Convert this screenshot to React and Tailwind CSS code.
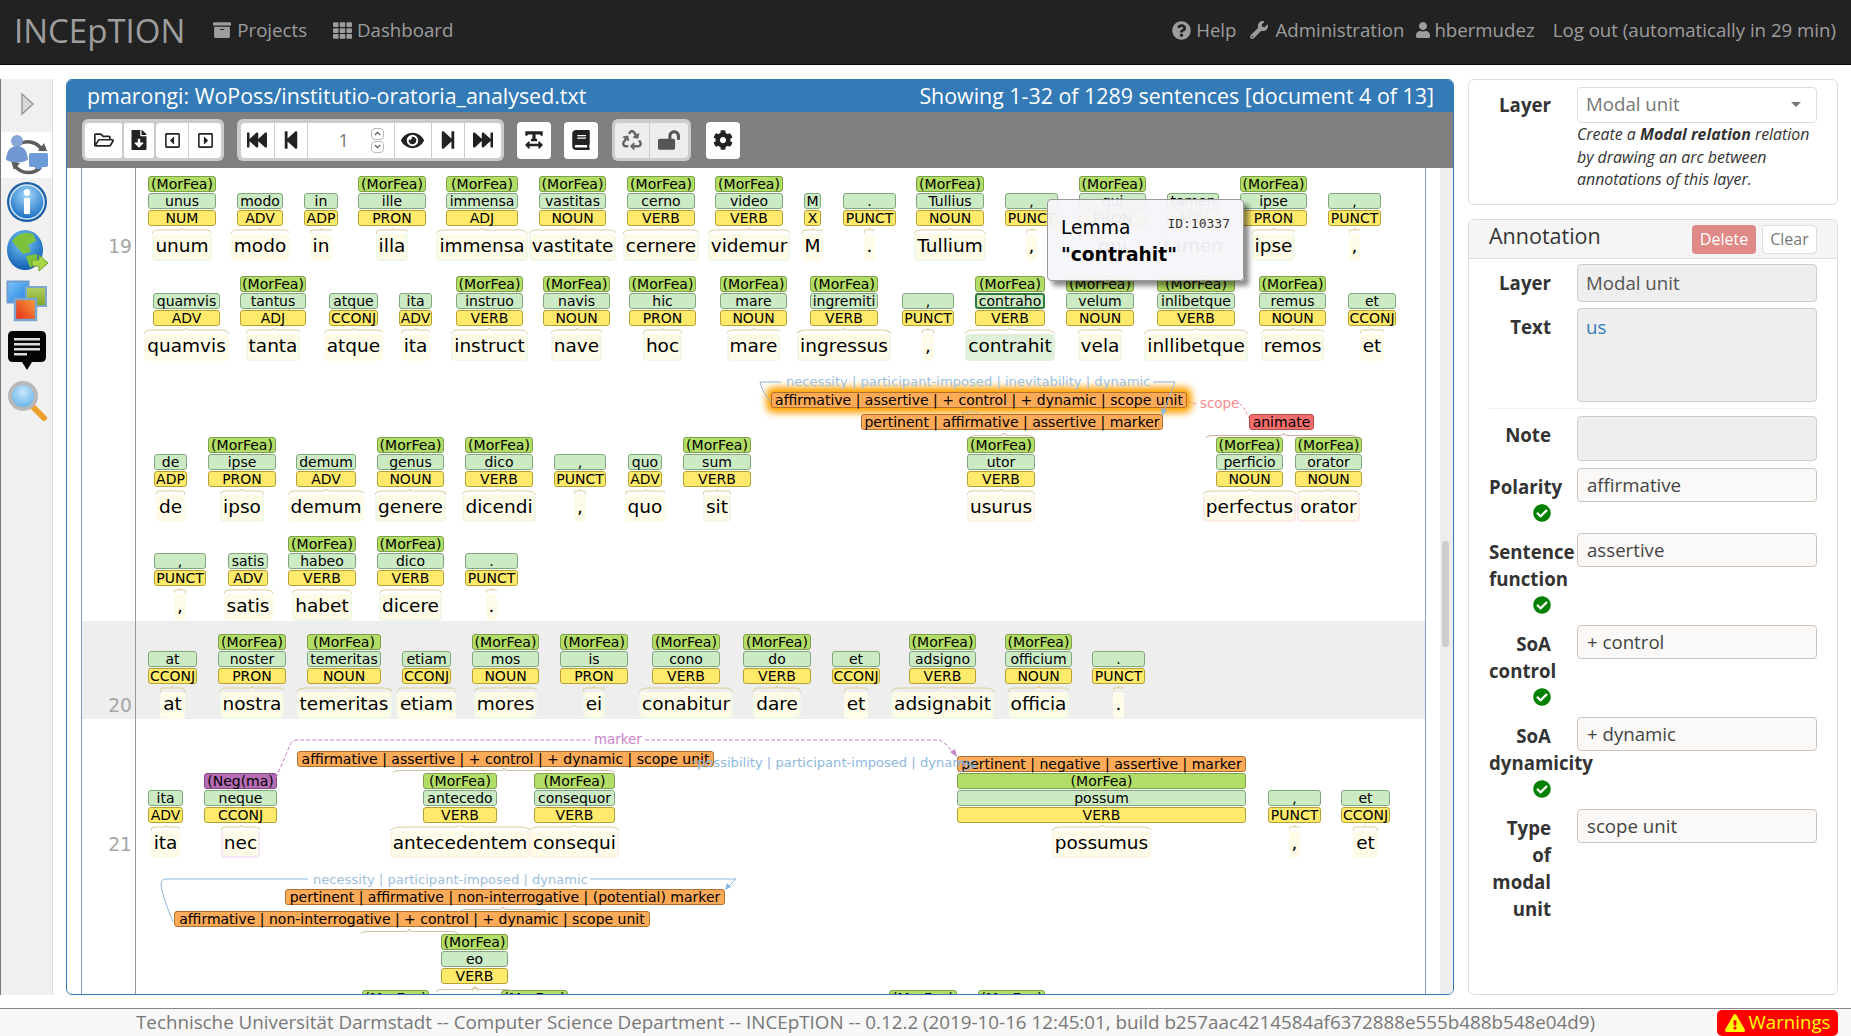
import {
  FaArchive, FaTh, FaQuestionCircle, FaWrench, FaUser, FaRegFolderOpen, FaFileDownload,
  FaRegCaretSquareLeft, FaRegCaretSquareRight, FaFastBackward, FaStepBackward, FaEye,
  FaStepForward, FaFastForward, FaTextWidth, FaBook, FaRecycle, FaLockOpen, FaCog,
  FaCheckCircle, FaExclamationTriangle, FaChevronUp, FaChevronDown,
} from "react-icons/fa";

const M = "(MorFea)";

// [lemma, pos, word, hasMorFea, left, right, tint]
const line1 = [
  ["unus", "NUM", "unum", 1, 148, 216],
  ["modo", "ADV", "modo", 0, 237, 283],
  ["in", "ADP", "in", 0, 304, 338],
  ["ille", "PRON", "illa", 1, 358, 426],
  ["immensa", "ADJ", "immensa", 1, 446, 518],
  ["vastitas", "NOUN", "vastitate", 1, 539, 606],
  ["cerno", "VERB", "cernere", 1, 627, 695],
  ["video", "VERB", "videmur", 1, 715, 783],
  ["M", "X", "M", 0, 804, 821],
  [".", "PUNCT", ".", 0, 843, 896],
  ["Tullius", "NOUN", "Tullium", 1, 916, 984],
  [",", "PUNCT", ",", 0, 1005, 1058],
  ["qui", "PRON", "qui", 1, 1079, 1146],
  ["tamen", "ADV", "tamen", 0, 1167, 1219],
  ["ipse", "PRON", "ipse", 1, 1240, 1307],
  [",", "PUNCT", ",", 0, 1328, 1381],
];
const line2 = [
  ["quamvis", "ADV", "quamvis", 0, 153, 220],
  ["tantus", "ADJ", "tanta", 1, 240, 306],
  ["atque", "CCONJ", "atque", 0, 329, 378],
  ["ita", "ADV", "ita", 0, 399, 432],
  ["instruo", "VERB", "instruct", 1, 456, 523],
  ["navis", "NOUN", "nave", 1, 543, 610],
  ["hic", "PRON", "hoc", 1, 629, 696],
  ["mare", "NOUN", "mare", 1, 720, 787],
  ["ingremiti", "VERB", "ingressus", 1, 810, 878],
  [",", "PUNCT", ",", 0, 902, 954],
  ["contraho", "VERB", "contrahit", 1, 975, 1045, "sel"],
  ["velum", "NOUN", "vela", 1, 1066, 1134],
  ["inlibetque", "VERB", "inllibetque", 1, 1157, 1235],
  ["remus", "NOUN", "remos", 1, 1259, 1326],
  ["et", "CCONJ", "et", 0, 1348, 1396],
];
const line3 = [
  ["de", "ADP", "de", 0, 154, 187],
  ["ipse", "PRON", "ipso", 1, 208, 276],
  ["demum", "ADV", "demum", 0, 296, 356],
  ["genus", "NOUN", "genere", 1, 377, 444],
  ["dico", "VERB", "dicendi", 1, 465, 533],
  [",", "PUNCT", ",", 0, 554, 606],
  ["quo", "ADV", "quo", 0, 628, 662],
  ["sum", "VERB", "sit", 1, 683, 751],
  ["utor", "VERB", "usurus", 1, 967, 1035, "orange"],
  ["perficio", "NOUN", "perfectus", 1, 1216, 1283, "red"],
  ["orator", "NOUN", "orator", 1, 1295, 1362, "red"],
];
const line4 = [
  [",", "PUNCT", ",", 0, 154, 206],
  ["satis", "ADV", "satis", 0, 228, 268],
  ["habeo", "VERB", "habet", 1, 288, 356],
  ["dico", "VERB", "dicere", 1, 377, 444],
  [".", "PUNCT", ".", 0, 465, 518],
];
const line20 = [
  ["at", "CCONJ", "at", 0, 148, 197],
  ["noster", "PRON", "nostra", 1, 218, 286],
  ["temeritas", "NOUN", "temeritas", 1, 307, 381],
  ["etiam", "CCONJ", "etiam", 0, 402, 451],
  ["mos", "NOUN", "mores", 1, 472, 539],
  ["is", "PRON", "ei", 1, 560, 628],
  ["cono", "VERB", "conabitur", 1, 652, 720],
  ["do", "VERB", "dare", 1, 743, 811],
  ["et", "CCONJ", "et", 0, 832, 880],
  ["adsigno", "VERB", "adsignabit", 1, 909, 976],
  ["officium", "NOUN", "officia", 1, 1005, 1072],
  [".", "PUNCT", ".", 0, 1092, 1145],
];
const line21 = [
  ["ita", "ADV", "ita", 0, 148, 183],
  ["neque", "CCONJ", "nec", 2, 204, 277, "purple"],
  ["antecedo", "VERB", "antecedentem", 1, 423, 497, "orange"],
  ["consequor", "VERB", "consequi", 1, 534, 615, "orange"],
  ["possum", "VERB", "possumus", 1, 957, 1246, "orange"],
  [",", "PUNCT", ",", 0, 1268, 1321],
  ["et", "CCONJ", "et", 0, 1341, 1390],
];

const wordTint = {
  green: "bg-[#fdfbe6] border-[#f0f8e8]",
  yellow: "bg-[#fefce9] border-[#fefce9]",
  sel: "bg-[#dff0d8] border-[#e4f3de]",
  orange: "bg-[#fefce9] border-[#fdf2e6]",
  red: "bg-[#fefce9] border-[#fde9e6]",
  purple: "bg-[#fefce9] border-[#f3e6f5]",
};

function Chip({ children, color }) {
  const colors = {
    green: "border bg-[#b2dd66] border-[#7f9f4c]",
    light: "border bg-[#ccebc5] border-[#7fa97c]",
    lightSel: "border-2 bg-[#ccebc5] border-[#2f7a3c]",
    yellow: "border bg-[#ffea6b] border-[#b5a134] mt-[1px]",
    purple: "border bg-[#b56cb5] border-[#7d4a7d]",
    red: "border bg-[#f56e6e] border-[#b04c4c]",
  };
  return (
    <div className={`h-4 w-full flex items-center justify-center rounded-[3px] text-[14px] leading-none text-black whitespace-nowrap ${colors[color]}`}>
      {children}
    </div>
  );
}

function Token({ t, y }) {
  const [lemma, pos, word, top, left, right, tint] = t;
  const wordClass = wordTint[tint || (top ? "green" : "yellow")];
  return (
    <div className="absolute flex flex-col items-center" style={{ left: left - 136, width: right - left, top: y }}>
      {top === 1 && <Chip color="green">{M}</Chip>}
      {top === 2 && <Chip color="purple">(Neg(ma)</Chip>}
      {!top && <div className="h-4" />}
      <div className="w-full mt-[1px]">
        <Chip color={tint === "sel" ? "lightSel" : "light"}>{lemma}</Chip>
      </div>
      <Chip color="yellow">{pos}</Chip>
      <div className={`relative mt-[8px] h-[27px] px-[1px] rounded-[4px] border-x-2 border-b-2 text-[18.5px] leading-[24px] text-black whitespace-nowrap ${wordClass}`}>
        {word}
        <svg className="absolute -top-[6px] -left-[2px] w-[calc(100%+4px)] h-[6px]" viewBox="0 0 100 6" preserveAspectRatio="none">
          <path d="M0 6 Q1 2 10 2 L46 2 Q50 2 50 0 Q50 2 54 2 L90 2 Q99 2 100 6" fill="none" stroke="#d8cf9a" strokeWidth="1" vectorEffect="non-scaling-stroke" />
        </svg>
      </div>
    </div>
  );
}

function Span({ x, x2, y, text, className = "" }) {
  return (
    <div className={`absolute flex items-center justify-center h-4 rounded-[3px] border bg-[#fdab58] border-[#b06f2c] text-[14px] leading-none text-black whitespace-nowrap ${className}`} style={{ left: x - 136, width: x2 - x, top: y }}>
      {text}
    </div>
  );
}

function Brace({ x, x2, y, peak, color = "#cdbfa0" }) {
  const p = peak ?? (x + x2) / 2;
  return <path d={`M${x} ${y + 4} Q${x + 1} ${y + 1.5} ${x + 8} ${y + 1.5} L${p - 4} ${y + 1.5} Q${p} ${y + 1.5} ${p} ${y - 1} Q${p} ${y + 1.5} ${p + 4} ${y + 1.5} L${x2 - 8} ${y + 1.5} Q${x2 - 1} ${y + 1.5} ${x2} ${y + 4}`} fill="none" stroke={color} strokeWidth="1" />;
}

function Sentence({ num, height, top, numY, className = "", children }) {
  return (
    <div className={`flex ${className}`} style={{ height }}>
      <div className="w-[54px] shrink-0 border-r border-[#999] text-right pr-[3px] text-[18.67px] text-[#a5a5a5]" style={{ paddingTop: numY - top }}>
        {num}
      </div>
      <div className="relative flex-1">{children}</div>
    </div>
  );
}

function Arcs({ top, height, children }) {
  return (
    <svg className="absolute left-0 top-0 w-[1290px] pointer-events-none overflow-visible" style={{ height }} viewBox={`136 ${top} 1290 ${height}`}>
      {children}
    </svg>
  );
}

function Btn({ children, className = "" }) {
  return (
    <button className={`h-[35px] flex items-center justify-center text-[#222] bg-white ${className}`}>
      {children}
    </button>
  );
}

function Field({ label, check, className = "", children }) {
  return (
    <div className={`flex gap-[26px] ${className}`}>
      <div className="w-[62px] shrink-0 pt-[5px] text-right text-[18.67px] leading-[27px] font-bold text-[#333]">
        {label}
        {check && (
          <div className="h-[27px] pt-[4px]">
            <FaCheckCircle className="ml-auto w-[18px] h-[18px] text-[#008000]" />
          </div>
        )}
      </div>
      {children}
    </div>
  );
}

function Value({ children }) {
  return (
    <div className="w-[240px] h-[34px] px-[9px] rounded-[4px] border border-[#ccc4be] bg-[#faf9f7] text-[18.67px] leading-[31px] text-[#444]">
      {children}
    </div>
  );
}

function SideIcons() {
  return (
    <div className="w-[53px] shrink-0 bg-[#f0f0f0] border-l border-l-[#777] border-r border-r-[#ddd] flex flex-col items-center">
      <svg width="16" height="24" viewBox="0 0 16 24" className="mt-[13px] mb-[16px]">
        <path d="M3 2 L14 12 L3 22 Z" fill="#d8d8d8" stroke="#999" strokeWidth="1.5" />
      </svg>
      <div className="w-full h-[46px] bg-white flex items-center justify-center">
        <svg width="44" height="42" viewBox="0 0 44 42">
          <path d="M14 10 A17 17 0 0 1 37 16" fill="none" stroke="#5c5c5c" strokeWidth="3.5" />
          <path d="M33 17 L42 17 L39 9 Z" fill="#5c5c5c" />
          <path d="M36 33 A17 17 0 0 1 10 32" fill="none" stroke="#5c5c5c" strokeWidth="3.5" />
          <path d="M6 27 L15 29 L9 36 Z" fill="#5c5c5c" />
          <circle cx="12" cy="7" r="6" fill="#86a6d8" />
          <path d="M1 26 Q2 12 12 12 Q22 12 23 26 Q12 31 1 26 Z" fill="#7397d2" />
          <rect x="24" y="19" width="19" height="14" rx="2" fill="#6c9bd8" />
          <rect x="30" y="33" width="7" height="2" fill="#6c9bd8" />
        </svg>
      </div>
      <svg width="42" height="42" viewBox="0 0 42 42" className="mt-[3px]">
        <defs>
          <radialGradient id="infoG" cx="50%" cy="30%" r="70%">
            <stop offset="0%" stopColor="#a6d8fa" />
            <stop offset="100%" stopColor="#1a6fc2" />
          </radialGradient>
        </defs>
        <circle cx="21" cy="21" r="20" fill="#1d5fa6" />
        <circle cx="21" cy="21" r="17" fill="url(#infoG)" stroke="#d5e8f8" strokeWidth="1.5" />
        <circle cx="21" cy="11.5" r="3.2" fill="#fff" />
        <rect x="18" y="17" width="6" height="16" rx="1" fill="#fff" />
      </svg>
      <svg width="42" height="44" viewBox="0 0 42 44" className="mt-[6px]">
        <defs>
          <radialGradient id="globeG" cx="45%" cy="30%" r="70%">
            <stop offset="0%" stopColor="#7cc8f8" />
            <stop offset="100%" stopColor="#0f5fb5" />
          </radialGradient>
        </defs>
        <ellipse cx="19" cy="21" rx="18" ry="20" fill="url(#globeG)" />
        <path d="M6 12 Q14 1 27 5 L30 12 L22 16 L25 23 L17 25 L11 18 Z" fill="#7cc23a" />
        <path d="M20 27 L31 25 L31 33 L24 39 Z" fill="#7cc23a" />
        <path d="M26 31 H33 V26 L42 34 L33 42 V37 H26 Z" fill="#a6d646" stroke="#6f9f2a" strokeWidth="1" />
      </svg>
      <svg width="42" height="42" viewBox="0 0 42 42" className="mt-[7px]">
        <defs>
          <linearGradient id="winB" x1="0" y1="0" x2="1" y2="1">
            <stop offset="0%" stopColor="#7cc4f8" />
            <stop offset="100%" stopColor="#1f7fe0" />
          </linearGradient>
          <linearGradient id="winG" x1="0" y1="0" x2="0" y2="1">
            <stop offset="0%" stopColor="#b4cf68" />
            <stop offset="100%" stopColor="#7ea51f" />
          </linearGradient>
          <linearGradient id="winR" x1="0" y1="1" x2="1" y2="0">
            <stop offset="0%" stopColor="#e82a14" />
            <stop offset="100%" stopColor="#f5a040" />
          </linearGradient>
        </defs>
        <rect x="1.5" y="1.5" width="21" height="21" fill="url(#winB)" stroke="#6f9ccc" strokeWidth="2" />
        <rect x="20" y="7" width="20" height="19" fill="url(#winG)" stroke="#7ea6cc" strokeWidth="2" />
        <rect x="9" y="19" width="21" height="21" fill="url(#winR)" stroke="#7ea6cc" strokeWidth="2.5" />
      </svg>
      <svg width="40" height="40" viewBox="0 0 40 40" className="mt-[9px]">
        <path d="M6 0 H34 Q39 0 39 5 V26 Q39 31 34 31 H25 L20 39 L15 31 H6 Q1 31 1 26 V5 Q1 0 6 0 Z" fill="#050505" />
        <rect x="7" y="7" width="26" height="2.5" fill="#ddd" />
        <rect x="7" y="12" width="26" height="2.5" fill="#ddd" />
        <rect x="7" y="17" width="26" height="2.5" fill="#ddd" />
        <rect x="7" y="22" width="13" height="2.5" fill="#ddd" />
      </svg>
      <svg width="42" height="42" viewBox="0 0 42 42" className="mt-[9px]">
        <defs>
          <radialGradient id="lensG" cx="50%" cy="35%" r="65%">
            <stop offset="0%" stopColor="#c8e8fb" />
            <stop offset="100%" stopColor="#5fb0ea" />
          </radialGradient>
        </defs>
        <path d="M27 27 L38 38" stroke="#eca02c" strokeWidth="6" strokeLinecap="round" />
        <circle cx="17" cy="16" r="13" fill="url(#lensG)" stroke="#b8b8b8" strokeWidth="4" />
      </svg>
    </div>
  );
}

function Toolbar() {
  const i = "w-[20px] h-[20px]";
  const sep = "border-r border-[#ccc]";
  return (
    <div className="h-[56px] bg-[#808080] flex items-center pl-[15px]">
      <div className="flex bg-[#ccc] rounded-[6px] p-[3px] h-[42px] items-center">
        <div className="flex gap-[2px]">
          <Btn className="w-[37px] rounded-l-[4px] rounded-r-[2px]"><FaRegFolderOpen className={i} /></Btn>
          <Btn className="w-[30px] rounded-[2px]"><FaFileDownload className={i} /></Btn>
          <div className="flex rounded-[4px] overflow-hidden">
            <Btn className={`w-[33px] ${sep}`}><FaRegCaretSquareLeft className="w-[17px] h-[17px]" /></Btn>
            <Btn className="w-[32px]"><FaRegCaretSquareRight className="w-[17px] h-[17px]" /></Btn>
          </div>
        </div>
      </div>
      <div className="flex bg-[#ccc] rounded-[6px] p-[3.5px] h-[42px] items-center ml-[13px]">
        <div className="flex rounded-[4px] overflow-hidden">
          <Btn className={`w-[34px] ${sep}`}><FaFastBackward className={i} /></Btn>
          <Btn className={`w-[33px] ${sep}`}><FaStepBackward className={i} /></Btn>
          <div className={`w-[87px] h-[35px] bg-white flex items-center ${sep} text-[18px] text-[#777]`}>
            <span className="ml-[31px] w-[32px]">1</span>
            <span className="flex flex-col gap-[1px]">
              <span className="w-[13px] h-[12px] rounded-[4px] border border-[#bbb] flex items-center justify-center"><FaChevronUp className="w-[7px] h-[7px] text-[#444]" /></span>
              <span className="w-[13px] h-[12px] rounded-[4px] border border-[#bbb] flex items-center justify-center"><FaChevronDown className="w-[7px] h-[7px] text-[#444]" /></span>
            </span>
          </div>
          <Btn className={`w-[37px] ${sep}`}><FaEye className="w-[23px] h-[23px]" /></Btn>
          <Btn className={`w-[33px] ${sep}`}><FaStepForward className={i} /></Btn>
          <Btn className="w-[36px]"><FaFastForward className={i} /></Btn>
        </div>
      </div>
      <Btn className="w-[34px] h-[37px] ml-[13px] rounded-[4px]"><FaTextWidth className={i} /></Btn>
      <Btn className="w-[34px] h-[37px] ml-[13px] rounded-[4px]"><FaBook className={i} /></Btn>
      <div className="flex bg-[#ccc] rounded-[6px] p-[3px] h-[42px] items-center ml-[14px]">
        <div className="flex rounded-[4px] overflow-hidden">
          <Btn className={`w-[35px] !bg-[#eee] !text-[#666] ${sep}`}><FaRecycle className={i} /></Btn>
          <Btn className="w-[38px] !bg-[#eee] !text-[#555]"><FaLockOpen className="w-[22px] h-[22px]" /></Btn>
        </div>
      </div>
      <Btn className="w-[34px] h-[37px] ml-[15px] rounded-[4px]"><FaCog className={i} /></Btn>
    </div>
  );
}

function Canvas() {
  const dejavu = "font-['DejaVu_Sans',sans-serif]";
  return (
    <div className={`relative flex-1 ml-[14px] border-x border-[#7c9fe0] overflow-hidden ${dejavu}`}>
      <Sentence num="19" top={168} numY={233} height={453}>
        {line1.map((t) => <Token key={t[2] + t[4]} t={t} y={8} />)}
        {line2.map((t) => <Token key={t[2] + t[4]} t={t} y={108} />)}
        {line3.map((t) => <Token key={t[2] + t[4]} t={t} y={269} />)}
        {line4.map((t) => <Token key={t[2] + t[4]} t={t} y={368} />)}
        <Span x={771} x2={1187} y={224} text="affirmative | assertive | + control | + dynamic | scope unit" className="shadow-[0_0_7px_5px_#ffa200]" />
        <Span x={861} x2={1163} y={246} text="pertinent | affirmative | assertive | marker" />
        <div className="absolute left-[1113px] top-[246px] w-[65px]">
          <Chip color="red">animate</Chip>
        </div>
        <Arcs top={168} height={453}>
          <path d="M771 402 Q762 392 760 382 L781 382" fill="none" stroke="#8db6dc" strokeWidth="1" />
          <path d="M1153 382 L1175 382 L1163 413" fill="none" stroke="#8db6dc" strokeWidth="1" />
          <path d="M1162 416 L1161 408 L1167 410 Z" fill="#8db6dc" />
          <text x="786" y="386" fontSize="13.1" fill="#9cc0e0">necessity | participant-imposed | inevitability | dynamic</text>
          <path d="M1188 402 L1197 404 M1240 404 L1244 408 L1249 418" fill="none" stroke="#f58c8c" strokeWidth="1" strokeDasharray="3 2" />
          <text x="1200" y="408" fontSize="13.4" fill="#f58c8c">scope</text>
          <Brace x={969} x2={1034} y={434} peak={1004} />
          <Brace x={1206} x2={1358} y={434} peak={1284} color="#d6a8a0" />
          <Brace x={960} x2={980} y={411} color="#cdbfa0" />
        </Arcs>
      </Sentence>
      <Sentence num="20" top={621} numY={692} height={98} className="bg-[#eee]">
        {line20.map((t) => <Token key={t[2] + t[4]} t={t} y={13} />)}
      </Sentence>
      <Sentence num="21" top={719} numY={831} height={276}>
        {line21.map((t) => <Token key={t[2] + t[4]} t={t} y={54} />)}
        <Span x={297} x2={714} y={32} text="affirmative | assertive | + control | + dynamic | scope unit" />
        <Span x={957} x2={1246} y={37} text="pertinent | negative | assertive | marker" />
        <Span x={285} x2={725} y={170} text="pertinent | affirmative | non-interrogative | (potential) marker" />
        <Span x={174} x2={650} y={192} text="affirmative | non-interrogative | + control | + dynamic | scope unit" />
        <Token t={["eo", "VERB", "", 1, 441, 508]} y={215} />
        <div className="absolute left-[226px] top-[271px] w-[67px]"><Chip color="green">{M}</Chip></div>
        <div className="absolute left-[365px] top-[271px] w-[67px]"><Chip color="green">{M}</Chip></div>
        <div className="absolute left-[753px] top-[271px] w-[68px]"><Chip color="green">{M}</Chip></div>
        <div className="absolute left-[842px] top-[271px] w-[67px]"><Chip color="green">{M}</Chip></div>
        <Arcs top={719} height={276}>
          <path d="M276 778 L290 745 Q292 740 298 740 L590 740" fill="none" stroke="#c983c9" strokeWidth="1" strokeDasharray="4 2" />
          <path d="M645 740 L940 740 L947 745 L956 756" fill="none" stroke="#c983c9" strokeWidth="1" strokeDasharray="4 2" />
          <path d="M957 757 L950 752 L955 749 Z" fill="#c983c9" />
          <text x="594" y="744" fontSize="13.4" fill="#c983c9">marker</text>
          <path d="M692 762 L697 762" fill="none" stroke="#8db6dc" strokeWidth="1" />
          <text x="697" y="767" fontSize="13.1" fill="#8fb8dd">possibility | participant-imposed | dynamic</text>
          <path d="M958 762 L977 766 L960 772" fill="none" stroke="#8db6dc" strokeWidth="1" />
          <Brace x={393} x2={615} y={769} peak={504} />
          <path d="M173 922 Q162 895 161 885 Q161 879 166 879 L308 879" fill="none" stroke="#8db6dc" strokeWidth="1" />
          <path d="M590 879 L736 879 L726 889" fill="none" stroke="#8db6dc" strokeWidth="1" />
          <path d="M725 890 L727 883 L731 887 Z" fill="#8db6dc" />
          <text x="313" y="884" fontSize="13.1" fill="#9cc0e0">necessity | participant-imposed | dynamic</text>
          <Brace x={459} x2={547} y={908} />
          <Brace x={361} x2={458} y={930} peak={409} />
          <Brace x={436} x2={513} y={988} peak={475} />
        </Arcs>
      </Sentence>

      <div className="absolute left-[965px] top-[31px] w-[197px] h-[82px] rounded-[4px] border border-[#999] bg-[#f5f5fa]/95 shadow-[5px_5px_5px_rgba(0,0,0,0.45)] pl-[13px] pr-[13px] pt-[14px] text-[18.67px] leading-[27px] text-black">
        <div className="flex justify-between items-start">
          <span>Lemma</span>
          <span className="font-['DejaVu_Sans_Mono',monospace] text-[13px] leading-[20px] text-[#333]">ID:10337</span>
        </div>
        <div className="font-bold">"contrahit"</div>
      </div>
    </div>
  );
}

function RightPanel() {
  return (
    <div className="w-[370px] shrink-0 ml-[14px] flex flex-col gap-[14px]">
      <div className="h-[126px] rounded-[6px] border border-[#ddd] pl-[20px] pt-[7px] flex gap-[26px]">
        <div className="w-[62px] shrink-0 text-right text-[18.67px] leading-[36px] font-bold text-[#333]">Layer</div>
        <div className="w-[240px]">
          <div className="h-[36px] px-[8px] pb-[2px] rounded-[4px] border border-[#ddd] text-[18.67px] leading-[32px] text-[#777] flex justify-between items-center">
            Modal unit
            <span className="mr-[7px] border-x-[5px] border-x-transparent border-t-[5px] border-t-[#777]" />
          </div>
          <p className="text-[15.9px] leading-[22.6px] italic text-[#333] whitespace-nowrap">
            Create a <b>Modal relation</b> relation<br />by drawing an arc between<br />annotations of this layer.
          </p>
        </div>
      </div>
      <div className="flex-1 rounded-[6px] border border-[#ddd]">
        <div className="h-[39px] bg-[#f5f5f5] border-b border-[#ddd] rounded-t-[6px] flex items-center pl-[20px] pr-[20px]">
          <span className="text-[21.5px] text-[#333] leading-none -mt-[6px]">Annotation</span>
          <span className="ml-auto h-[29px] w-[64px] rounded-[4px] bg-[#e08a87] text-white text-[16px] leading-[29px] text-center">Delete</span>
          <span className="ml-[6px] h-[29px] w-[55px] rounded-[4px] bg-white border border-[#ddd] text-[#777] text-[16px] leading-[27px] text-center">Clear</span>
        </div>
        <div className="pl-[20px] pt-[5px]">
          <Field label="Layer">
            <div className="w-[240px] h-[38px] px-[8px] rounded-[4px] border border-[#ccc] bg-[#eee] text-[18.67px] leading-[36px] text-[#555]">Modal unit</div>
          </Field>
          <Field label="Text" className="mt-[6px]">
            <div className="w-[240px] h-[94px] px-[8px] pt-[4px] rounded-[4px] border border-[#ccc] bg-[#eee] text-[18.67px] leading-[27px] text-[#337ab7]">us</div>
          </Field>
          <div className="w-[328px] mt-[6px] border-t border-[#eee]" />
          <Field label="Note" className="mt-[7px]">
            <div className="w-[240px] h-[45px] rounded-[4px] border border-[#ccc] bg-[#eee]" />
          </Field>
          <Field label="Polarity" check className="mt-[7px]"><Value>affirmative</Value></Field>
          <Field label="Sentence function" check className="mt-[6px]"><Value>assertive</Value></Field>
          <Field label="SoA control" check className="mt-[6px]"><Value>+ control</Value></Field>
          <Field label="SoA dynamicity" check className="mt-[6px]"><Value>+ dynamic</Value></Field>
          <Field label="Type of modal unit" className="mt-[6px]"><Value>scope unit</Value></Field>
        </div>
      </div>
    </div>
  );
}

export default function App() {
  return (
    <div className="h-screen w-full flex flex-col overflow-hidden bg-white font-['Open_Sans',sans-serif]">
      <nav className="h-[65px] shrink-0 bg-[#222] border-b border-[#080808] pb-[4px] flex items-center text-[18.67px] text-[#9d9d9d]">
        <span className="ml-[14px] text-[33px] leading-none">INCEpTION</span>
        <FaArchive className="ml-[28px] w-[18px] h-[18px]" />
        <span className="ml-[6px]">Projects</span>
        <FaTh className="ml-[26px] w-[19px] h-[19px]" />
        <span className="ml-[5px]">Dashboard</span>
        <div className="ml-auto mr-[15px] flex items-center">
          <FaQuestionCircle className="w-[19px] h-[19px]" />
          <span className="ml-[5px]">Help</span>
          <FaWrench className="ml-[14px] w-[18px] h-[18px]" />
          <span className="ml-[7px]">Administration</span>
          <FaUser className="ml-[11px] w-[16px] h-[16px]" />
          <span className="ml-[3px]">hbermudez</span>
          <span className="ml-[18px]">Log out (automatically in 29 min)</span>
        </div>
      </nav>
      <main className="flex-1 min-h-0 flex pt-[14px] pb-[13px]">
        <SideIcons />
        <div className="w-[1388px] shrink-0 ml-[13px] flex flex-col rounded-[6px] border border-[#337ab7] overflow-hidden">
          <div className="h-[32px] bg-[#337ab7] text-white text-[21.4px] leading-[31px] flex justify-between pl-[20px] pr-[19px] shrink-0">
            <span>pmarongi: WoPoss/institutio-oratoria_analysed.txt</span>
            <span>Showing 1-32 of 1289 sentences [document 4 of 13]</span>
          </div>
          <Toolbar />
          <div className="flex-1 min-h-0 flex">
            <Canvas />
            <div className="w-[27px] shrink-0 flex">
              <div className="w-[14px] bg-white" />
              <div className="flex-1 bg-[#eee] relative">
                <div className="absolute left-[2px] top-[373px] w-[7px] h-[106px] rounded-full bg-[#ccc]" />
              </div>
            </div>
          </div>
        </div>
        <RightPanel />
      </main>
      <footer className="h-[28px] shrink-0 border-t border-[#888] bg-[#f8f8f8] flex items-center text-[18.8px] text-[#777]">
        <span className="ml-[136px] whitespace-nowrap">Technische Universität Darmstadt -- Computer Science Department -- INCEpTION -- 0.12.2 (2019-10-16 12:45:01, build b257aac4214584af6372888e555b488b548e04d9)</span>
        <span className="ml-auto mr-[13px] w-[121px] h-[26px] bg-[#ff0000] rounded-[5px] text-[18.67px] text-[#ffff00] flex items-center justify-center gap-[4px] leading-none">
          <FaExclamationTriangle className="w-[20px] h-[20px]" />Warnings
        </span>
      </footer>
    </div>
  );
}
